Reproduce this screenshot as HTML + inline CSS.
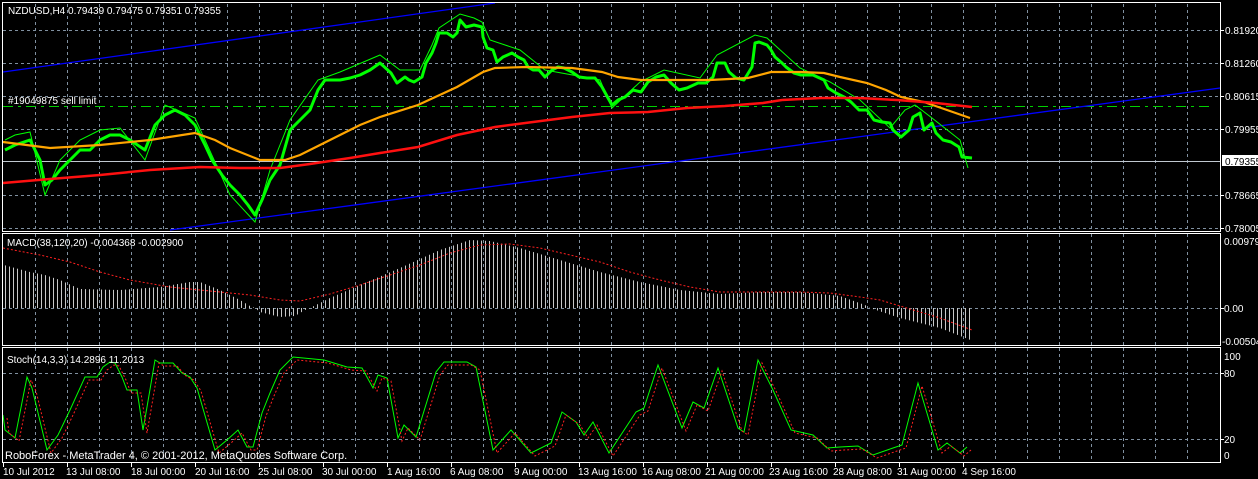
<!DOCTYPE html>
<html><head><meta charset="utf-8"><style>
html,body{margin:0;padding:0;background:#000;width:1258px;height:479px;overflow:hidden}
svg{display:block}
text{font-family:"Liberation Sans",sans-serif;font-size:10px;fill:#fff}
</style></head><body>
<svg width="1258" height="479" viewBox="0 0 1258 479" xmlns="http://www.w3.org/2000/svg">
<defs>
<pattern id="bars" x="1" y="0" width="4" height="10" patternUnits="userSpaceOnUse">
<rect x="0" y="0" width="1" height="10" fill="#c8c8c8"/>
</pattern>
</defs>
<rect width="1258" height="479" fill="#000"/>
<g stroke="#8090a0" stroke-width="1" stroke-dasharray="3,3" fill="none">
<path d="M35.5 4V231M67.5 4V231M99.5 4V231M131.5 4V231M163.5 4V231M195.5 4V231M227.5 4V231M259.5 4V231M291.5 4V231M323.5 4V231M355.5 4V231M387.5 4V231M419.5 4V231M451.5 4V231M483.5 4V231M515.5 4V231M547.5 4V231M579.5 4V231M611.5 4V231M643.5 4V231M675.5 4V231M707.5 4V231M739.5 4V231M771.5 4V231M803.5 4V231M835.5 4V231M867.5 4V231M899.5 4V231M931.5 4V231M963.5 4V231M995.5 4V231M1027.5 4V231M1059.5 4V231M1091.5 4V231M1123.5 4V231M1155.5 4V231M1187.5 4V231"/>
<path d="M35.5 234V345M67.5 234V345M99.5 234V345M131.5 234V345M163.5 234V345M195.5 234V345M227.5 234V345M259.5 234V345M291.5 234V345M323.5 234V345M355.5 234V345M387.5 234V345M419.5 234V345M451.5 234V345M483.5 234V345M515.5 234V345M547.5 234V345M579.5 234V345M611.5 234V345M643.5 234V345M675.5 234V345M707.5 234V345M739.5 234V345M771.5 234V345M803.5 234V345M835.5 234V345M867.5 234V345M899.5 234V345M931.5 234V345M963.5 234V345M995.5 234V345M1027.5 234V345M1059.5 234V345M1091.5 234V345M1123.5 234V345M1155.5 234V345M1187.5 234V345"/>
<path d="M35.5 348V462M67.5 348V462M99.5 348V462M131.5 348V462M163.5 348V462M195.5 348V462M227.5 348V462M259.5 348V462M291.5 348V462M323.5 348V462M355.5 348V462M387.5 348V462M419.5 348V462M451.5 348V462M483.5 348V462M515.5 348V462M547.5 348V462M579.5 348V462M611.5 348V462M643.5 348V462M675.5 348V462M707.5 348V462M739.5 348V462M771.5 348V462M803.5 348V462M835.5 348V462M867.5 348V462M899.5 348V462M931.5 348V462M963.5 348V462M995.5 348V462M1027.5 348V462M1059.5 348V462M1091.5 348V462M1123.5 348V462M1155.5 348V462M1187.5 348V462"/>
<path d="M3 30.5H1220M3 63.5H1220M3 96.5H1220M3 129.5H1220M3 195.5H1220M3 228.5H1220M3 308.5H1220M3 373.5H1220M3 439.5H1220"/>
</g>
<path d="M3 161.5H1220" stroke="#c0c8d0" stroke-width="1"/>
<path d="M3 106.5H1213" stroke="#00d000" stroke-width="1" stroke-dasharray="10,5,3,5"/>
<path d="M3 72L495 3M170 230L1220 88" stroke="#0000ff" stroke-width="1.3" fill="none"/>
<!-- candles approximated -->
<polyline fill="none" stroke="#00ff00" stroke-width="3" stroke-linejoin="round" points="5,150 15,145 30,140 40,160 45,185 52,180 60,170 70,160 80,150 90,150 100,140 110,135 120,135 130,140 145,150 155,125 165,115 175,110 185,115 195,125 205,145 212,160 222,175 230,185 240,195 248,205 255,215 262,200 270,180 280,165 290,130 300,120 310,110 318,90 325,80 340,80 350,78 360,75 370,70 380,63 391,73 397,83 405,77 409,80 414,82 422,77 426,63 432,53 436,43 439,33 447,33 453,37 457,33 460,20 466,27 474,25 482,27 483,37 487,48 493,50 497,62 503,57 512,53 518,57 524,60 528,67 533,70 539,70 545,77 552,70 558,67 564,68 572,72 579,77 587,78 595,78 602,87 608,98 612,105 618,100 625,97 633,90 641,92 648,82 656,77 664,75 671,83 679,90 687,88 698,83 706,83 713,77 717,63 725,63 729,72 736,78 744,80 752,67 755,43 759,42 767,45 771,50 775,57 782,63 786,67 794,73 801,75 813,75 824,80 828,88 836,93 844,97 851,102 859,110 867,110 874,120 882,122 890,123 893,130 901,137 909,130 913,117 920,113 924,130 932,123 936,133 943,140 951,142 959,147 962,157 972,158"/>
<polyline fill="none" stroke="#00ff00" stroke-width="1" points="5,140 15,135 30,132 45,195 60,160 80,140 100,130 120,128 145,160 165,105 195,118 230,195 255,222 270,170 290,120 318,80 340,72 380,55 400,70 420,70 432,45 439,28 460,14 474,18 482,22 490,40 520,50 545,70 600,80 612,108 640,82 664,70 700,78 717,55 755,35 767,38 800,68 830,82 860,100 890,128 905,110 915,105 932,118 960,140 968,168"/>
<!-- MAs -->
<polyline fill="none" stroke="#ffa500" stroke-width="2.2" points="3,142 50,148 100,145 150,140 195,133 215,140 230,148 260,160 285,160 300,155 320,145 340,135 360,125 380,117 418,105 457,87 483,72 495,68 526,67 572,68 602,72 618,77 641,80 671,80 710,80 748,78 771,72 801,72 824,73 840,77 867,83 886,90 901,97 924,102 947,110 970,118"/>
<polyline fill="none" stroke="#ff1010" stroke-width="2.5" points="3,183 50,179 100,175 150,170 200,167 240,168 280,168 310,164 350,158 380,153 418,147 457,135 495,127 533,122 572,117 610,113 648,112 687,108 725,106 763,103 782,100 821,98 859,98 897,100 936,103 972,107"/>
<!-- MACD -->
<polygon fill="url(#bars)" points="4,308 4,265 15,268 30,272 45,275 60,280 80,289 120,290 160,287 190,282 200,282 220,290 240,300 250,306 255,308 260,312 280,317 295,316 305,310 310,308 330,298 360,285 400,268 440,250 470,240 490,241 520,248 560,260 600,272 640,282 680,290 720,294 760,292 800,292 840,296 865,305 870,308 900,318 940,328 973,341 973,308"/>
<polyline fill="none" stroke="#ff2020" stroke-width="1" stroke-dasharray="2,2" points="3,248 40,255 70,262 100,272 130,280 170,287 200,290 250,295 280,300 300,301 330,294 360,285 390,275 420,265 450,253 480,245 510,244 540,248 570,255 600,262 630,272 660,280 690,287 720,292 760,292 800,292 830,293 860,297 880,300 900,306 920,312 940,318 972,330"/>
<!-- Stoch -->
<polyline fill="none" stroke="#00ff00" stroke-width="1" points="3,415 5,430 15,438 27,377 32,388 47,450 58,435 70,410 85,377 97,377 103,367 110,362 115,363 122,377 127,390 137,390 143,430 147,407 155,360 160,363 173,363 182,373 190,377 197,388 215,450 227,440 238,430 247,447 253,447 262,413 270,393 280,370 293,357 324,360 347,367 362,368 373,388 378,375 387,378 398,438 404,425 416,437 436,372 444,362 467,362 476,367 493,450 511,430 531,453 551,443 562,412 576,422 584,435 593,422 609,453 636,412 644,408 658,365 682,428 693,402 704,408 718,368 738,428 744,432 758,360 773,390 791,430 813,435 827,448 840,447 858,446 873,455 893,448 902,445 918,383 938,450 947,443 960,453 967,447"/>
<polyline fill="none" stroke="#ff2020" stroke-width="1" stroke-dasharray="2,2" transform="translate(4,3)" points="3,415 5,430 15,438 27,377 32,388 47,450 58,435 70,410 85,377 97,377 103,367 110,362 115,363 122,377 127,390 137,390 143,430 147,407 155,360 160,363 173,363 182,373 190,377 197,388 215,450 227,440 238,430 247,447 253,447 262,413 270,393 280,370 293,357 324,360 347,367 362,368 373,388 378,375 387,378 398,438 404,425 416,437 436,372 444,362 467,362 476,367 493,450 511,430 531,453 551,443 562,412 576,422 584,435 593,422 609,453 636,412 644,408 658,365 682,428 693,402 704,408 718,368 738,428 744,432 758,360 773,390 791,430 813,435 827,448 840,447 858,446 873,455 893,448 902,445 918,383 938,450 947,443 960,453 967,447"/>
<g stroke="#fff" stroke-width="1" fill="none">
<rect x="2.5" y="2.5" width="1218" height="229"/>
<rect x="2.5" y="233.5" width="1218" height="112"/>
<rect x="2.5" y="347.5" width="1218" height="115"/>
</g>
<g stroke="#fff" stroke-width="1">
<path d="M1221 30.5h3M1221 63.5h3M1221 96.5h3M1221 129.5h3M1221 195.5h3M1221 228.5h3M1221 308.5h3M1221 373.5h3M1221 439.5h3"/>
<path d="M3.5 463v4M67.5 463v4M131.5 463v4M195.5 463v4M259.5 463v4M323.5 463v4M387.5 463v4M451.5 463v4M515.5 463v4M579.5 463v4M643.5 463v4M707.5 463v4M771.5 463v4M835.5 463v4M899.5 463v4M963.5 463v4"/>
</g>
<text x="8" y="14">NZDUSD,H4  0.79439 0.79475 0.79351 0.79355</text>
<text x="8" y="104">#19049875 sell limit</text>
<text x="7" y="246">MACD(38,120,20) -0.004368 -0.002900</text>
<text x="7" y="363">Stoch(14,3,3) 14.2896 11.2013</text>
<text x="5" y="459" style="font-size:11px">RoboForex - MetaTrader 4, © 2001-2012, MetaQuotes Software Corp.</text>
<g>
<text x="1225" y="34">0.81920</text>
<text x="1225" y="67">0.81260</text>
<text x="1225" y="100">0.80615</text>
<text x="1225" y="133">0.79955</text>
<rect x="1222" y="155" width="36" height="11" fill="#fff"/>
<text x="1225" y="165" style="fill:#000">0.79355</text>
<text x="1225" y="199">0.78665</text>
<text x="1225" y="232">0.78005</text>
<text x="1224" y="245">0.00979</text>
<text x="1224" y="312">0.00</text>
<text x="1222" y="345">-0.00504</text>
<text x="1224" y="360">100</text>
<text x="1224" y="377">80</text>
<text x="1224" y="443">20</text>
<text x="1224" y="459">0</text>
</g>
<g>
<text x="3" y="475">10 Jul 2012</text>
<text x="66" y="475">13 Jul 08:00</text>
<text x="131" y="475">18 Jul 00:00</text>
<text x="195" y="475">20 Jul 16:00</text>
<text x="258" y="475">25 Jul 08:00</text>
<text x="322" y="475">30 Jul 00:00</text>
<text x="387" y="475">1 Aug 16:00</text>
<text x="450" y="475">6 Aug 08:00</text>
<text x="514" y="475">9 Aug 00:00</text>
<text x="578" y="475">13 Aug 16:00</text>
<text x="642" y="475">16 Aug 08:00</text>
<text x="705" y="475">21 Aug 00:00</text>
<text x="769" y="475">23 Aug 16:00</text>
<text x="833" y="475">28 Aug 08:00</text>
<text x="897" y="475">31 Aug 00:00</text>
<text x="962" y="475">4 Sep 16:00</text>
</g>
</svg>
</body></html>
